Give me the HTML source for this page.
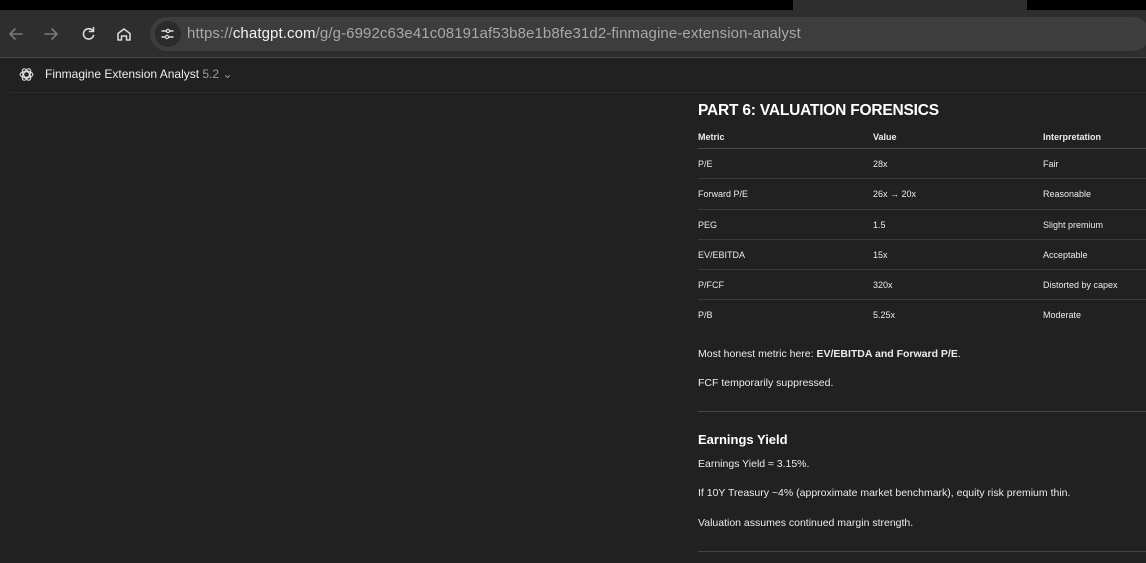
<!DOCTYPE html>
<html><head><meta charset="utf-8"><style>
*{margin:0;padding:0;box-sizing:border-box}
body{width:1146px;height:563px;overflow:hidden;background:#212121;font-family:"Liberation Sans",sans-serif;color:#ececec;position:relative}
.a{position:absolute;white-space:nowrap}
.t{font-size:9px;line-height:12px}
.line{position:absolute;left:698px;right:0;height:1px;background:#3a3a3a}
</style></head><body>
<div class="a" style="left:0;top:0;width:1146px;height:11px;background:#000"></div>
<div class="a" style="left:793px;top:0;width:234px;height:11px;background:#2e2e2e"></div>
<div class="a" style="left:760px;top:0;width:33px;height:11px;background:#000;border-radius:0 0 10px 0"></div>
<div class="a" style="left:1027px;top:0;width:40px;height:11px;background:#000;border-radius:0 0 0 10px"></div>
<div class="a" style="left:0;top:10px;width:1146px;height:47px;background:#2e2e2e"></div>
<div class="a" style="left:0;top:57px;width:1146px;height:1px;background:#4a4a4a"></div>
<div class="a" style="left:150px;top:17px;width:1000px;height:34px;background:#3d3d3d;border-radius:17px"></div>
<div class="a" style="left:155px;top:21px;width:26px;height:26px;background:#2b2b2b;border-radius:13px"></div>
<svg class="a" style="left:0;top:20px" width="190" height="28" viewBox="0 0 190 28" fill="none" stroke-linecap="round" stroke-linejoin="round">
<path d="M22 14H10M15 9l-5 5 5 5" stroke="#7a7a7a" stroke-width="1.6"/>
<path d="M45 14h12M52 9l5 5-5 5" stroke="#7a7a7a" stroke-width="1.6"/>
<path d="M93 11a5.2 5.2 0 1 0 .6 4.5M93.5 7.5v4h-4" stroke="#ddd" stroke-width="1.6"/>
<path d="M118 20v-6.5l6-4.5 6 4.5V20h-3.5v-4h-5v4z" stroke="#ddd" stroke-width="1.5"/>
<path d="M162 11h4M170 11h3M162 17h3M169 17h4" stroke="#ddd" stroke-width="1.4"/>
<circle cx="168" cy="11" r="1.6" stroke="#ddd" stroke-width="1.2"/><circle cx="167" cy="17" r="1.6" stroke="#ddd" stroke-width="1.2"/>
</svg>
<div class="a" style="left:187px;top:25px;font-size:15px;line-height:18px;color:#a8a8a8;letter-spacing:0.1px">https://<span style="color:#f2f2f2">chatgpt.com</span>/g/g-6992c63e41c08191af53b8e1b8fe31d2-finmagine-extension-analyst</div>
<svg class="a" style="left:18px;top:66px" width="17" height="17" viewBox="0 0 24 24" fill="none" stroke="#ddd" stroke-width="1.5"><circle cx="12" cy="12" r="4"/><ellipse cx="12" cy="12" rx="9" ry="4.5"/><ellipse cx="12" cy="12" rx="9" ry="4.5" transform="rotate(60 12 12)"/><ellipse cx="12" cy="12" rx="9" ry="4.5" transform="rotate(120 12 12)"/></svg>
<div class="a" style="left:45px;top:67px;font-size:12px;line-height:15px;color:#ececec">Finmagine Extension Analyst <span style="color:#9a9a9a">5.2 ⌄</span></div>
<div class="a" style="left:10px;top:92px;width:1136px;height:1px;background:#2c2c2c"></div>

<div class="a" style="left:698px;top:101px;font-size:15.5px;font-weight:bold;line-height:19px;color:#fff;letter-spacing:-0.2px">PART 6: VALUATION FORENSICS</div>
<div class="a t" style="left:698px;top:131px;font-weight:bold">Metric</div>
<div class="a t" style="left:873px;top:131px;font-weight:bold">Value</div>
<div class="a t" style="left:1043px;top:131px;font-weight:bold">Interpretation</div>
<div class="line" style="top:148px;background:#4a4a4a"></div>

<div class="a t" style="left:698px;top:158px">P/E</div><div class="a t" style="left:873px;top:158px">28x</div><div class="a t" style="left:1043px;top:158px">Fair</div>
<div class="line" style="top:178px"></div>
<div class="a t" style="left:698px;top:188px">Forward P/E</div><div class="a t" style="left:873px;top:188px">26x → 20x</div><div class="a t" style="left:1043px;top:188px">Reasonable</div>
<div class="line" style="top:209px"></div>
<div class="a t" style="left:698px;top:219px">PEG</div><div class="a t" style="left:873px;top:219px">1.5</div><div class="a t" style="left:1043px;top:219px">Slight premium</div>
<div class="line" style="top:239px"></div>
<div class="a t" style="left:698px;top:249px">EV/EBITDA</div><div class="a t" style="left:873px;top:249px">15x</div><div class="a t" style="left:1043px;top:249px">Acceptable</div>
<div class="line" style="top:269px"></div>
<div class="a t" style="left:698px;top:279px">P/FCF</div><div class="a t" style="left:873px;top:279px">320x</div><div class="a t" style="left:1043px;top:279px">Distorted by capex</div>
<div class="line" style="top:299px"></div>
<div class="a t" style="left:698px;top:309px">P/B</div><div class="a t" style="left:873px;top:309px">5.25x</div><div class="a t" style="left:1043px;top:309px">Moderate</div>

<div class="a" style="left:698px;top:348px;font-size:10.5px;line-height:13px">Most honest metric here: <b>EV/EBITDA and Forward P/E</b>.</div>
<div class="a" style="left:698px;top:377px;font-size:10.5px;line-height:13px">FCF temporarily suppressed.</div>
<div class="line" style="top:411px;background:#444"></div>
<div class="a" style="left:698px;top:432px;font-size:13px;font-weight:bold;line-height:16px;color:#fff">Earnings Yield</div>
<div class="a" style="left:698px;top:458px;font-size:10.5px;line-height:13px">Earnings Yield ≈ 3.15%.</div>
<div class="a" style="left:698px;top:487px;font-size:10.5px;line-height:13px">If 10Y Treasury ~4% (approximate market benchmark), equity risk premium thin.</div>
<div class="a" style="left:698px;top:517px;font-size:10.5px;line-height:13px">Valuation assumes continued margin strength.</div>
<div class="line" style="top:551px;background:#444"></div>
</body></html>
